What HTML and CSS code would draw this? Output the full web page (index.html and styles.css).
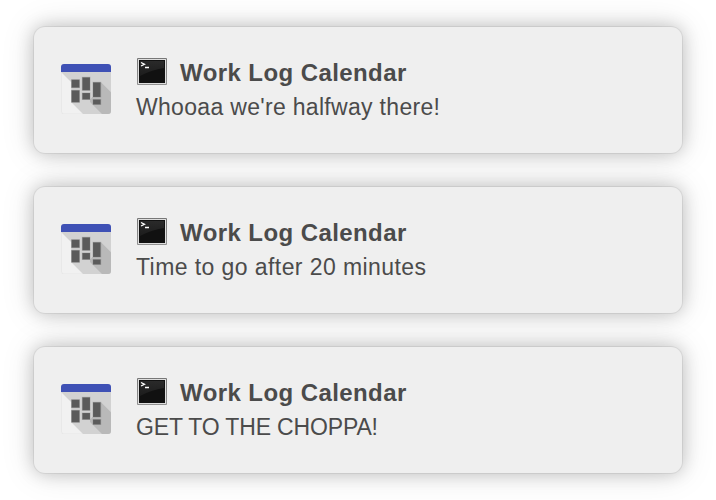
FILE: index.html
```html
<!DOCTYPE html>
<html lang="en">
<head>
<meta charset="utf-8">
<title>Work Log Calendar</title>
<link rel="stylesheet" href="styles.css">
</head>
<body>
<svg class="defs" aria-hidden="true">
  <linearGradient id="frame" x1="0" y1="0" x2="0" y2="1"><stop offset="0" stop-color="#777"/><stop offset="1" stop-color="#929292"/></linearGradient>
  <linearGradient id="gloss" x1="0" y1="0" x2="0" y2="1"><stop offset="0" stop-color="#2a2a2a"/><stop offset="1" stop-color="#1c1c1c"/></linearGradient>
  <symbol id="calendar" viewBox="0 0 50 50">
    <rect x=".5" y=".5" width="49" height="49.5" rx="2.5" fill="#f1f1f1" stroke="#e2e2e2" stroke-width=".6"/>
    <path d="M0 8H50V47Q50 50 47 50H22L10.300 38.300V18.300Z" fill="#d2d2d2"/>
    <path d="M40 18.300L50 28.300V47Q50 50 47 50H41L29 38V35.700L31.300 33H40Z" fill="#b9b9b9"/>
    <path d="M0 8V3Q0 0 3 0H47Q50 0 50 3V8Z" fill="#3f51b5"/>
    <g fill="#5b5b5b" stroke="#777" stroke-opacity=".35" stroke-width="1">
      <rect x="10.500" y="15.700" width="8" height="8"/><rect x="10.500" y="26.300" width="8" height="12"/>
      <rect x="21.300" y="13.300" width="7.700" height="13"/><rect x="21.300" y="29" width="7.700" height="6.500"/>
      <rect x="32" y="18.300" width="7.700" height="14.700"/><rect x="32" y="35.500" width="7.700" height="5"/>
    </g>
  </symbol>
  <symbol id="terminal" viewBox="0 0 30 27">
    <rect width="30" height="27" rx="1" fill="url(#frame)"/>
    <rect x="1" y="1" width="28" height="25" fill="#dedede"/>
    <rect x="2" y="2" width="26" height="23" fill="#111"/>
    <path d="M3 3H27V10Q14 12 3 18Z" fill="url(#gloss)"/>
    <path d="M4 4.500L7.500 6.300L4 8M8 9.500H12" fill="none" stroke="#fff" stroke-width="1.300"/>
  </symbol>
</svg>
<main class="notifications">
  <article class="card">
    <svg class="app-icon"><use href="#calendar"/></svg>
    <div class="content">
      <h2 class="title"><svg class="terminal"><use href="#terminal"/></svg><span>Work Log Calendar</span></h2>
      <p class="message">Whooaa we're halfway there!</p>
    </div>
  </article>
  <article class="card">
    <svg class="app-icon"><use href="#calendar"/></svg>
    <div class="content">
      <h2 class="title"><svg class="terminal"><use href="#terminal"/></svg><span>Work Log Calendar</span></h2>
      <p class="message reminder">Time to go after 20 minutes</p>
    </div>
  </article>
  <article class="card">
    <svg class="app-icon"><use href="#calendar"/></svg>
    <div class="content">
      <h2 class="title"><svg class="terminal"><use href="#terminal"/></svg><span>Work Log Calendar</span></h2>
      <p class="message upper">GET TO THE CHOPPA!</p>
    </div>
  </article>
</main>
</body>
</html>
```
FILE: styles.css
```css
body {
  margin: 0;
  background: #fff;
  color: #4b4b4b;
  font-family: "Liberation Sans", Arial, sans-serif;
  overflow: hidden;
}
.defs { display: block; width: 0; height: 0; }
.notifications {
  display: flex;
  flex-direction: column;
  gap: 34px;
  padding: 27px 34px;
}
.card {
  box-sizing: border-box;
  width: 648px;
  height: 126px;
  padding: 30px 27px;
  display: flex;
  gap: 25px;
  background: #efefef;
  border-radius: 11px;
  box-shadow: 0 0 0 1px rgba(0, 0, 0, .06), 0 0 18px rgba(0, 0, 0, .2), 0 0 34px rgba(0, 0, 0, .13);
}
.app-icon { width: 50px; height: 50px; margin-top: 7px; flex: none; }
.title {
  display: flex;
  gap: 13px;
  margin: 0;
  font-size: 24px;
  line-height: 32px;
  letter-spacing: .42px;
}
.terminal { width: 30px; height: 27px; margin: 1px 0 0 1px; }
.message {
  margin: 2px 0 0;
  font-size: 23px;
  line-height: 32px;
  letter-spacing: .31px;
}
.reminder { letter-spacing: .42px; }
.upper { letter-spacing: -.15px; }
```
